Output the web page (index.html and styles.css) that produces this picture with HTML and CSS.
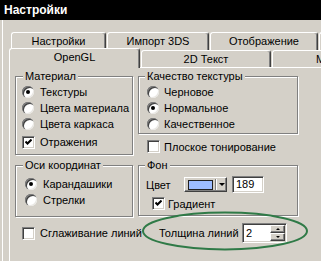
FILE: index.html
```html
<!DOCTYPE html>
<html lang="ru">
<head>
<meta charset="utf-8">
<title>Настройки</title>
<link rel="stylesheet" href="styles.css">
</head>
<body>
<div class="titlebar">Настройки</div>
<div class="window">
  <div class="tabrow back">
    <div class="tab w95">Настройки</div>
    <div class="tab w102">Импорт 3DS</div>
    <div class="tab w108">Отображение</div>
    <div class="tab w130"></div>
  </div>
  <div class="tabrow front">
    <div class="tab selected">OpenGL</div>
    <div class="tab">2D Текст</div>
    <div class="tab last">М</div>
  </div>
  <div class="panel">
    <div class="row row1">
      <div class="group g-material">
        <div class="group-title">Материал</div>
        <div class="opts">
          <div class="opt"><span class="radio"><span class="dot"></span></span>Текстуры</div>
          <div class="opt"><span class="radio"></span>Цвета материала</div>
          <div class="opt h15"><span class="radio"></span>Цвета каркаса</div>
          <div class="opt chk-gap"><span class="check"><svg viewBox="0 0 7 7" width="7" height="7"><polyline points="0.5,2.5 2.5,4.5 6.5,0.5" fill="none" stroke="#000" stroke-width="2"/></svg></span>Отражения</div>
        </div>
      </div>
      <div class="col">
        <div class="group g-quality">
          <div class="group-title narrow">Качество текстуры</div>
          <div class="opts">
            <div class="opt"><span class="radio"></span>Черновое</div>
            <div class="opt"><span class="radio"><span class="dot"></span></span>Нормальное</div>
            <div class="opt h15"><span class="radio"></span>Качественное</div>
          </div>
        </div>
        <div class="opt flat"><span class="check"></span>Плоское тонирование</div>
      </div>
    </div>
    <div class="row row2">
      <div class="group g-axes">
        <div class="group-title">Оси координат</div>
        <div class="opts">
          <div class="opt"><span class="radio"><span class="dot"></span></span>Карандашики</div>
          <div class="opt"><span class="radio"></span>Стрелки</div>
        </div>
      </div>
      <div class="group g-bg">
        <div class="group-title narrow">Фон</div>
        <div class="color-row">
          <span class="label-color">Цвет</span>
          <span class="color-btn"><span class="swatch"></span><span class="sep"></span><span class="arrow"></span></span>
          <span class="field field-189">189</span>
        </div>
        <div class="opt grad"><span class="check"><svg viewBox="0 0 7 7" width="7" height="7"><polyline points="0.5,2.5 2.5,4.5 6.5,0.5" fill="none" stroke="#000" stroke-width="2"/></svg></span>Градиент</div>
      </div>
    </div>
    <div class="row row3">
      <div class="opt smooth"><span class="check"></span>Сглаживание линий</div>
      <div class="thick">
        <span class="label-thick">Толщина линий</span>
        <span class="field spin"><span class="spin-val">2</span><span class="spin-btns"><span class="sbtn"><span class="tri-up"></span></span><span class="sbtn"><span class="tri-down"></span></span></span></span>
      </div>
    </div>
  </div>
</div>
<svg class="mark" width="168" height="42" viewBox="0 0 168 42"><ellipse cx="84" cy="21" rx="82" ry="18.5" fill="none" stroke="#2f7a47" stroke-width="2"/></svg>
</body>
</html>
```
FILE: styles.css
```css
* { box-sizing: border-box; }
html, body { margin: 0; padding: 0; }
body {
  width: 321px;
  height: 261px;
  overflow: hidden;
  position: relative;
  background: #d4d0c8;
  font-family: "Liberation Sans", Arial, sans-serif;
  font-size: 11px;
  color: #000;
}
.titlebar {
  height: 20px;
  background: #000;
  color: #fff;
  font-weight: bold;
  font-size: 12px;
  line-height: 21px;
  padding-left: 4px;
}
.window {
  margin-left: 2px;
  border-left: 1px solid #fff;
  height: 241px;
  padding-top: 12px;
}
.tabrow { display: flex; gap: 1px; }
.tabrow.back { padding-left: 8px; height: 18px; }
.tab {
  flex: none;
  height: 18px;
  line-height: 17px;
  text-align: center;
  white-space: nowrap;
  overflow: hidden;
  background: #d4d0c8;
  border-top: 1px solid #fff;
  border-left: 1px solid #fff;
  border-right: 1px solid #404040;
  box-shadow: inset -1px 0 #808080;
  border-radius: 3px 3px 0 0;
}
.w95 { width: 95px; }
.w102 { width: 102px; }
.w108 { width: 108px; }
.w130 { width: 130px; }
.tabrow.front {
  padding-left: 6px;
  margin-top: -2px;
  height: 19px;
  align-items: flex-end;
}
.front .tab { width: 130px; height: 17px; line-height: 16px; }
.front .tab.last { text-align: left; padding-left: 43px; }
.front .tab.selected {
  width: 131px;
  height: 20px;
  line-height: 17px;
  margin-bottom: -1px;
  position: relative;
  z-index: 1;
}
.panel {
  margin-left: 6px;
  width: 330px;
  height: 200px;
  border-top: 1px solid #fff;
  border-left: 1px solid #fff;
  padding: 8px 0 0 5px;
}
.row {
  display: grid;
  grid-template-columns: 118px 160px;
  column-gap: 5px;
  align-items: start;
}
.row2 { margin-top: 10px; }
.row3 { margin-top: 6px; height: 20px; align-items: center; }
.group {
  border: 1px solid #808080;
  box-shadow: inset 1px 1px #fff, 1px 1px #fff;
}
.group-title {
  width: fit-content;
  margin: -7px 0 0 7px;
  padding: 0 2px;
  line-height: 13px;
  background: #d4d0c8;
}
.group-title.narrow { margin-left: 6px; }
.opts { padding: 1px 0 4px 6px; }
.opt { display: flex; align-items: center; height: 16px; white-space: nowrap; }
.opt.h15 { height: 15px; }
.opt.chk-gap { margin-top: 3px; }
.g-quality .opts { padding: 1px 0 2px 8px; }
.g-quality .radio { margin-right: 5px; }
.g-axes .opts { padding: 4px 0 8px 9px; }
.radio {
  flex: none;
  width: 12px;
  height: 12px;
  border-radius: 50%;
  background: #fff;
  box-shadow: inset 1px 1px 0 #808080, inset 2px 2px 0 #404040, inset -1px -1px 0 #e8e6e2;
  margin-right: 6px;
  display: flex;
  align-items: center;
  justify-content: center;
}
.dot { width: 4px; height: 4px; border-radius: 50%; background: #000; }
.check {
  flex: none;
  width: 13px;
  height: 13px;
  background: #fff;
  border: 1px solid;
  border-color: #808080 #fff #fff #808080;
  box-shadow: inset 1px 1px #404040, inset -1px -1px #d4d0c8;
  margin-right: 5px;
  display: flex;
  align-items: center;
  justify-content: center;
}
.check svg { display: block; }
.opt.flat { margin-top: 6px; height: 13px; padding-left: 9px; }
.opt.flat .check { margin-right: 4px; }
.color-row {
  display: flex;
  align-items: center;
  height: 17px;
  margin-top: 4px;
  padding-left: 7px;
}
.label-color { width: 38px; flex: none; }
.color-btn {
  flex: none;
  width: 43px;
  height: 15px;
  display: flex;
  align-items: center;
  border: 1px solid;
  border-color: #fff #404040 #404040 #fff;
  box-shadow: inset -1px -1px #808080;
  padding-left: 3px;
}
.swatch {
  width: 25px;
  height: 10px;
  background: #9dbcff;
  border: 1px solid #202020;
}
.sep {
  width: 2px;
  height: 11px;
  margin-left: 2px;
  border-left: 1px solid #808080;
  border-right: 1px solid #fff;
}
.arrow {
  margin-left: 2px;
  width: 0;
  height: 0;
  border-left: 3px solid transparent;
  border-right: 3px solid transparent;
  border-top: 3px solid #000;
}
.field {
  flex: none;
  background: #fff;
  border: 1px solid;
  border-color: #808080 #fff #fff #808080;
  box-shadow: inset 1px 1px #404040, inset -1px -1px #d4d0c8;
}
.field-189 {
  margin-left: 5px;
  width: 32px;
  height: 17px;
  line-height: 15px;
  padding-left: 3px;
}
.opt.grad { margin-top: 3px; height: 15px; padding-left: 13px; margin-bottom: 4px; }
.opt.grad .check { margin-right: 3px; }
.opt.smooth { padding-left: 7px; height: 20px; }
.thick { display: flex; align-items: center; height: 20px; padding-left: 21px; }
.label-thick { width: 83px; flex: none; white-space: nowrap; }
.spin {
  width: 45px;
  height: 20px;
  display: flex;
  align-items: center;
  padding: 0 1px 0 3px;
}
.spin-val { flex: 1; line-height: 16px; }
.spin-btns { display: flex; flex-direction: column; width: 15px; height: 16px; }
.sbtn {
  height: 8px;
  background: #d4d0c8;
  border: 1px solid;
  border-color: #fff #404040 #404040 #fff;
  box-shadow: inset -1px -1px #808080;
  display: flex;
  align-items: center;
  justify-content: center;
}
.tri-up, .tri-down {
  width: 0;
  height: 0;
  border-left: 2px solid transparent;
  border-right: 2px solid transparent;
}
.tri-up { border-bottom: 2px solid #000; }
.tri-down { border-top: 2px solid #000; }
.mark {
  position: absolute;
  left: 141px;
  top: 210px;
}
```
